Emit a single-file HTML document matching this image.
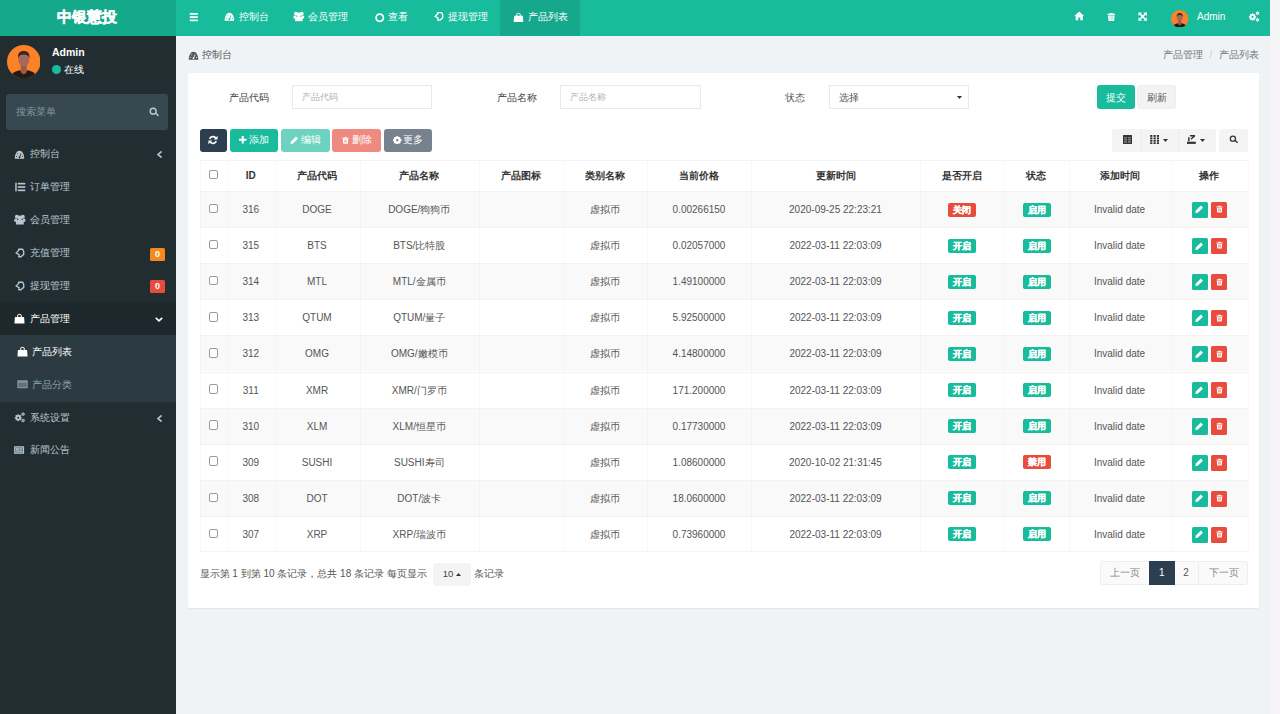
<!DOCTYPE html>
<html><head><meta charset="utf-8">
<style>
*{box-sizing:border-box;margin:0;padding:0}
html,body{width:1280px;height:714px;overflow:hidden}
body{background:#f5f5f7;font-family:"Liberation Sans",sans-serif;font-size:10px;color:#555;position:relative}
.a{position:absolute;white-space:nowrap}
svg.a{display:block}
</style></head><body>
<div class="a" style="left:0px;top:0px;width:1270px;height:714px;background:#f0f3f6;"></div>
<div class="a" style="left:0px;top:0px;width:176px;height:36px;background:#15a98b;"></div>
<div class="a" style="left:176px;top:0px;width:1094px;height:36px;background:#18bc9c;"></div>
<div class="a" style="left:0px;top:36px;width:176px;height:678px;background:#222d32;"></div>
<span class="a" style="left:57px;top:8.90px;font-size:15px;line-height:15px;color:#fff;font-weight:bold;-webkit-text-stroke:0.45px #fff">中银慧投</span>
<svg class="a" style="left:189.2px;top:12.6px;overflow:visible" width="9.6" height="8.2" viewBox="0 0 24 24" fill="#fff"><rect x="0" y="0" width="24" height="5" rx="1"/><rect x="0" y="9.5" width="24" height="5" rx="1"/><rect x="0" y="19" width="24" height="5" rx="1"/></svg>
<svg class="a" style="left:224px;top:11.5px;overflow:visible" width="10.8" height="9.5" viewBox="0 0 24 24" fill="#fff"><path d="M0 22C0 10.5 5.2 2 12 2s12 8.5 12 20z"/><circle fill="#18bc9c" cx="12" cy="18.5" r="2.4"/><path fill="#18bc9c" d="M11 18l4.2-9.5 1.8.8-4.2 9.5z"/><circle fill="#18bc9c" cx="4.5" cy="16" r="1.5"/><circle fill="#18bc9c" cx="7.5" cy="9.5" r="1.5"/><circle fill="#18bc9c" cx="19.5" cy="16" r="1.5"/></svg>
<span class="a" style="left:239px;top:12.00px;font-size:10px;line-height:10px;color:#fff;font-weight:normal;">控制台</span>
<svg class="a" style="left:293px;top:11.2px;overflow:visible" width="11.7" height="10.6" viewBox="0 0 24 24" fill="#fff"><circle cx="5.5" cy="6" r="4.3"/><circle cx="18.5" cy="6" r="4.3"/><circle cx="12" cy="8.5" r="5"/><path d="M0 10.5h6v6.5H0zM18 10.5h6v6.5h-6z"/><path d="M3.5 13.5h17V23h-17z" /><path d="M6 13h12v2H6z"/></svg>
<span class="a" style="left:308px;top:12.00px;font-size:10px;line-height:10px;color:#fff;font-weight:normal;">会员管理</span>
<svg class="a" style="left:374.5px;top:12.5px;overflow:visible" width="9.5" height="9.5" viewBox="0 0 24 24" fill="#fff"><circle cx="12" cy="12" r="9.2" fill="none" stroke="#fff" stroke-width="4.4"/></svg>
<span class="a" style="left:388px;top:12.00px;font-size:10px;line-height:10px;color:#fff;font-weight:normal;">查看</span>
<svg class="a" style="left:434px;top:11.2px;overflow:visible" width="9.5" height="10.8" viewBox="0 0 24 24" fill="#fff"><path d="M9 2.5h10.5L22 8.5v7L15 21.5H9.5l1-5.5L2.5 12 9 6z" fill="none" stroke="#fff" stroke-width="3.4" stroke-linejoin="round"/></svg>
<span class="a" style="left:448px;top:12.00px;font-size:10px;line-height:10px;color:#fff;font-weight:normal;">提现管理</span>
<div class="a" style="left:499.5px;top:0px;width:80.5px;height:36px;background:rgba(0,0,0,0.1);"></div>
<svg class="a" style="left:512.5px;top:11.5px;overflow:visible" width="11" height="10.5" viewBox="0 0 24 24" fill="#fff"><path d="M7 9V6.5C7 3.5 9.2 1.5 12 1.5s5 2 5 5V9h-2.2V6.5c0-1.6-1.2-2.8-2.8-2.8S9.2 4.9 9.2 6.5V9z"/><path d="M2 8.5h20l1 14.5H1z"/></svg>
<span class="a" style="left:527.5px;top:12.00px;font-size:10px;line-height:10px;color:#fff;font-weight:normal;">产品列表</span>
<svg class="a" style="left:1073.5px;top:11.3px;overflow:visible" width="10.5" height="9.8" viewBox="0 0 24 24" fill="#fff"><path d="M12 1.5L0 12h3.2v10.5h6.3V16h5v6.5h6.3V12H24z"/></svg>
<svg class="a" style="left:1106.8px;top:11.6px;overflow:visible" width="8.6" height="10" viewBox="0 0 24 24" fill="#fff"><path d="M8 0.5h8v2.5h6.5v3.5h-21V3H8z"/><path d="M2.8 7.5h18.4L19.8 23.5H4.2z"/><path fill="#9fe3d6" d="M7.5 10h2.2v10H7.5zM10.9 10h2.2v10h-2.2zM14.3 10h2.2v10h-2.2z"/></svg>
<svg class="a" style="left:1138px;top:12px;overflow:visible" width="9.3" height="9.2" viewBox="0 0 24 24" fill="#fff"><path d="M1 1h9.5L7.3 4.2 12 8.9l4.7-4.7L13.5 1H23v9.5l-3.2-3.2L15.1 12l4.7 4.7 3.2-3.2V23h-9.5l3.2-3.2L12 15.1l-4.7 4.7 3.2 3.2H1v-9.5l3.2 3.2L8.9 12 4.2 7.3 1 10.5z"/></svg>
<svg class="a" style="left:1171px;top:9.5px" width="17.5" height="17.5" viewBox="0 0 34 34"><defs><clipPath id="c2"><circle cx="17" cy="17" r="17"/></clipPath></defs><g clip-path="url(#c2)"><rect width="34" height="34" fill="#fb8227"/><path d="M3 36C3 29 8 26.5 13 25.5L17 28l4-2.5C26 26.5 31 29 31 36z" fill="#231a17"/><path d="M14 19h6v9l-3 2-3-2z" fill="#9a5b4c"/><ellipse cx="17" cy="14.5" rx="5.6" ry="7.2" fill="#a7675a"/><path d="M11.2 13.5C10.5 8.5 13 6 17 6s6.5 2.5 5.8 7.5c-.6-2.5-2.5-3.8-5.8-3.8s-5.2 1.3-5.8 3.8z" fill="#3b2620"/></g></svg>
<span class="a" style="left:1197px;top:11.50px;font-size:10px;line-height:10px;color:#fff;font-weight:normal;">Admin</span>
<svg class="a" style="left:1248px;top:11px;overflow:visible" width="12.3" height="11" viewBox="0 0 24 24" fill="#fff"><circle cx="8.5" cy="13" r="6.3" fill="#fff"/><rect x="7.0" y="5.1" width="3" height="3.2" fill="#fff" transform="rotate(0.0 8.5 13)"/><rect x="7.0" y="5.1" width="3" height="3.2" fill="#fff" transform="rotate(45.0 8.5 13)"/><rect x="7.0" y="5.1" width="3" height="3.2" fill="#fff" transform="rotate(90.0 8.5 13)"/><rect x="7.0" y="5.1" width="3" height="3.2" fill="#fff" transform="rotate(135.0 8.5 13)"/><rect x="7.0" y="5.1" width="3" height="3.2" fill="#fff" transform="rotate(180.0 8.5 13)"/><rect x="7.0" y="5.1" width="3" height="3.2" fill="#fff" transform="rotate(225.0 8.5 13)"/><rect x="7.0" y="5.1" width="3" height="3.2" fill="#fff" transform="rotate(270.0 8.5 13)"/><rect x="7.0" y="5.1" width="3" height="3.2" fill="#fff" transform="rotate(315.0 8.5 13)"/><circle cx="8.5" cy="13" r="2.4" fill="#18bc9c"/><circle cx="19.5" cy="5" r="3.2" fill="#fff"/><rect x="18.6" y="1.0999999999999996" width="1.8" height="2.3" fill="#fff" transform="rotate(0.0 19.5 5)"/><rect x="18.6" y="1.0999999999999996" width="1.8" height="2.3" fill="#fff" transform="rotate(60.0 19.5 5)"/><rect x="18.6" y="1.0999999999999996" width="1.8" height="2.3" fill="#fff" transform="rotate(120.0 19.5 5)"/><rect x="18.6" y="1.0999999999999996" width="1.8" height="2.3" fill="#fff" transform="rotate(180.0 19.5 5)"/><rect x="18.6" y="1.0999999999999996" width="1.8" height="2.3" fill="#fff" transform="rotate(240.0 19.5 5)"/><rect x="18.6" y="1.0999999999999996" width="1.8" height="2.3" fill="#fff" transform="rotate(300.0 19.5 5)"/><circle cx="19.5" cy="5" r="1.2" fill="#18bc9c"/><circle cx="19.5" cy="19.5" r="3.2" fill="#fff"/><rect x="18.6" y="15.6" width="1.8" height="2.3" fill="#fff" transform="rotate(0.0 19.5 19.5)"/><rect x="18.6" y="15.6" width="1.8" height="2.3" fill="#fff" transform="rotate(60.0 19.5 19.5)"/><rect x="18.6" y="15.6" width="1.8" height="2.3" fill="#fff" transform="rotate(120.0 19.5 19.5)"/><rect x="18.6" y="15.6" width="1.8" height="2.3" fill="#fff" transform="rotate(180.0 19.5 19.5)"/><rect x="18.6" y="15.6" width="1.8" height="2.3" fill="#fff" transform="rotate(240.0 19.5 19.5)"/><rect x="18.6" y="15.6" width="1.8" height="2.3" fill="#fff" transform="rotate(300.0 19.5 19.5)"/><circle cx="19.5" cy="19.5" r="1.2" fill="#18bc9c"/></svg>
<svg class="a" style="left:6.5px;top:44.5px" width="33.5" height="33.5" viewBox="0 0 34 34"><defs><clipPath id="c1"><circle cx="17" cy="17" r="17"/></clipPath></defs><g clip-path="url(#c1)"><rect width="34" height="34" fill="#fb8227"/><path d="M3 36C3 29 8 26.5 13 25.5L17 28l4-2.5C26 26.5 31 29 31 36z" fill="#231a17"/><path d="M14 19h6v9l-3 2-3-2z" fill="#9a5b4c"/><ellipse cx="17" cy="14.5" rx="5.6" ry="7.2" fill="#a7675a"/><path d="M11.2 13.5C10.5 8.5 13 6 17 6s6.5 2.5 5.8 7.5c-.6-2.5-2.5-3.8-5.8-3.8s-5.2 1.3-5.8 3.8z" fill="#3b2620"/></g></svg>
<span class="a" style="left:52px;top:46.75px;font-size:10.5px;line-height:10.5px;color:#fff;font-weight:bold;">Admin</span>
<div class="a" style="left:52px;top:65px;width:9px;height:9px;border-radius:50%;background:#18bc9c"></div>
<span class="a" style="left:64px;top:64.60px;font-size:10px;line-height:10px;color:#fff;font-weight:normal;">在线</span>
<div class="a" style="left:6px;top:94px;width:162px;height:36px;background:#374850;border-radius:3px"></div>
<span class="a" style="left:16px;top:107.25px;font-size:9.5px;line-height:9.5px;color:#8596a0;font-weight:normal;">搜索菜单</span>
<svg class="a" style="left:149px;top:107px;color:#b8c7ce;overflow:visible" width="10" height="10" viewBox="0 0 24 24" fill="#b8c7ce"><circle cx="10" cy="10" r="7" fill="none" stroke="currentColor" stroke-width="3.5"/><path d="M14.5 15.5l2.5-2.5 7 7-2.5 2.5z"/></svg>
<div class="a" style="left:0px;top:302px;width:176px;height:33px;background:#1e282c;"></div>
<div class="a" style="left:0px;top:335px;width:176px;height:66.5px;background:#2c3b41;"></div>
<svg class="a" style="left:14px;top:149.60000000000002px;overflow:visible" width="11" height="9.5" viewBox="0 0 24 24" fill="#b8c7ce"><path d="M0 22C0 10.5 5.2 2 12 2s12 8.5 12 20z"/><circle fill="#222d32" cx="12" cy="18.5" r="2.4"/><path fill="#222d32" d="M11 18l4.2-9.5 1.8.8-4.2 9.5z"/><circle fill="#222d32" cx="4.5" cy="16" r="1.5"/><circle fill="#222d32" cx="7.5" cy="9.5" r="1.5"/><circle fill="#222d32" cx="19.5" cy="16" r="1.5"/></svg>
<span class="a" style="left:30px;top:149.30px;font-size:10px;line-height:10px;color:#b8c7ce;font-weight:normal;">控制台</span>
<svg class="a" style="left:157px;top:151.3px;" width="5" height="7" viewBox="0 0 5 7" fill="#fff"><path d="M4.5 0.5L1 3.5l3.5 3" fill="none" stroke="#b8c7ce" stroke-width="1.6"/></svg>
<svg class="a" style="left:14.5px;top:182.20000000000002px;overflow:visible" width="10.5" height="10" viewBox="0 0 24 24" fill="#b8c7ce"><rect x="0" y="1.5" width="3.5" height="21"/><rect x="6" y="2" width="18" height="4"/><rect x="6" y="10" width="18" height="4"/><rect x="6" y="18" width="18" height="4"/></svg>
<span class="a" style="left:30px;top:182.20px;font-size:10px;line-height:10px;color:#b8c7ce;font-weight:normal;">订单管理</span>
<svg class="a" style="left:13.7px;top:214.10000000000002px;overflow:visible" width="11.7" height="11" viewBox="0 0 24 24" fill="#b8c7ce"><circle cx="5.5" cy="6" r="4.3"/><circle cx="18.5" cy="6" r="4.3"/><circle cx="12" cy="8.5" r="5"/><path d="M0 10.5h6v6.5H0zM18 10.5h6v6.5h-6z"/><path d="M3.5 13.5h17V23h-17z" /><path d="M6 13h12v2H6z"/></svg>
<span class="a" style="left:30px;top:215.10px;font-size:10px;line-height:10px;color:#b8c7ce;font-weight:normal;">会员管理</span>
<svg class="a" style="left:14.5px;top:248.0px;overflow:visible" width="9.5" height="10" viewBox="0 0 24 24" fill="none"><path d="M9 2.5h10.5L22 8.5v7L15 21.5H9.5l1-5.5L2.5 12 9 6z" fill="none" stroke="#b8c7ce" stroke-width="3.4" stroke-linejoin="round"/></svg>
<span class="a" style="left:30px;top:248.00px;font-size:10px;line-height:10px;color:#b8c7ce;font-weight:normal;">充值管理</span>
<div class="a" style="left:150px;top:247.50px;width:15px;height:13px;background:#f5891c;border-radius:1.5px;color:#fff;font-size:9px;font-weight:bold;line-height:13px;text-align:center">0</div>
<svg class="a" style="left:14.5px;top:280.9px;overflow:visible" width="9.5" height="10" viewBox="0 0 24 24" fill="none"><path d="M9 2.5h10.5L22 8.5v7L15 21.5H9.5l1-5.5L2.5 12 9 6z" fill="none" stroke="#b8c7ce" stroke-width="3.4" stroke-linejoin="round"/></svg>
<span class="a" style="left:30px;top:280.90px;font-size:10px;line-height:10px;color:#b8c7ce;font-weight:normal;">提现管理</span>
<div class="a" style="left:150px;top:280.40px;width:15px;height:13px;background:#e84c3d;border-radius:1.5px;color:#fff;font-size:9px;font-weight:bold;line-height:13px;text-align:center">0</div>
<svg class="a" style="left:14px;top:313.3px;overflow:visible" width="11" height="11" viewBox="0 0 24 24" fill="#fff"><path d="M7 9V6.5C7 3.5 9.2 1.5 12 1.5s5 2 5 5V9h-2.2V6.5c0-1.6-1.2-2.8-2.8-2.8S9.2 4.9 9.2 6.5V9z"/><path d="M2 8.5h20l1 14.5H1z"/></svg>
<span class="a" style="left:30px;top:313.80px;font-size:10px;line-height:10px;color:#fff;font-weight:normal;">产品管理</span>
<svg class="a" style="left:155px;top:317.3px;" width="8" height="5" viewBox="0 0 8 5" fill="#fff"><path d="M0.8 0.8l3.2 3 3.2-3" fill="none" stroke="#fff" stroke-width="1.6"/></svg>
<svg class="a" style="left:16.5px;top:346.2px;overflow:visible" width="11" height="11" viewBox="0 0 24 24" fill="#fff"><path d="M7 9V6.5C7 3.5 9.2 1.5 12 1.5s5 2 5 5V9h-2.2V6.5c0-1.6-1.2-2.8-2.8-2.8S9.2 4.9 9.2 6.5V9z"/><path d="M2 8.5h20l1 14.5H1z"/></svg>
<span class="a" style="left:32px;top:346.70px;font-size:10px;line-height:10px;color:#fff;font-weight:normal;">产品列表</span>
<svg class="a" style="left:16.5px;top:379.3px;overflow:visible" width="11" height="10.5" viewBox="0 0 24 24" fill="#8197a1"><rect x="0" y="3" width="24" height="18" rx="1.5"/><rect x="2.5" y="8.5" width="19" height="10" fill="#5e727b"/></svg>
<span class="a" style="left:32px;top:379.60px;font-size:10px;line-height:10px;color:#8aa4af;font-weight:normal;">产品分类</span>
<svg class="a" style="left:14px;top:412.2px;overflow:visible" width="11.5" height="10.5" viewBox="0 0 24 24" fill="#fff"><circle cx="8.5" cy="13" r="6.3" fill="#b8c7ce"/><rect x="7.0" y="5.1" width="3" height="3.2" fill="#b8c7ce" transform="rotate(0.0 8.5 13)"/><rect x="7.0" y="5.1" width="3" height="3.2" fill="#b8c7ce" transform="rotate(45.0 8.5 13)"/><rect x="7.0" y="5.1" width="3" height="3.2" fill="#b8c7ce" transform="rotate(90.0 8.5 13)"/><rect x="7.0" y="5.1" width="3" height="3.2" fill="#b8c7ce" transform="rotate(135.0 8.5 13)"/><rect x="7.0" y="5.1" width="3" height="3.2" fill="#b8c7ce" transform="rotate(180.0 8.5 13)"/><rect x="7.0" y="5.1" width="3" height="3.2" fill="#b8c7ce" transform="rotate(225.0 8.5 13)"/><rect x="7.0" y="5.1" width="3" height="3.2" fill="#b8c7ce" transform="rotate(270.0 8.5 13)"/><rect x="7.0" y="5.1" width="3" height="3.2" fill="#b8c7ce" transform="rotate(315.0 8.5 13)"/><circle cx="8.5" cy="13" r="2.4" fill="#222d32"/><circle cx="19.5" cy="5" r="3.2" fill="#b8c7ce"/><rect x="18.6" y="1.0999999999999996" width="1.8" height="2.3" fill="#b8c7ce" transform="rotate(0.0 19.5 5)"/><rect x="18.6" y="1.0999999999999996" width="1.8" height="2.3" fill="#b8c7ce" transform="rotate(60.0 19.5 5)"/><rect x="18.6" y="1.0999999999999996" width="1.8" height="2.3" fill="#b8c7ce" transform="rotate(120.0 19.5 5)"/><rect x="18.6" y="1.0999999999999996" width="1.8" height="2.3" fill="#b8c7ce" transform="rotate(180.0 19.5 5)"/><rect x="18.6" y="1.0999999999999996" width="1.8" height="2.3" fill="#b8c7ce" transform="rotate(240.0 19.5 5)"/><rect x="18.6" y="1.0999999999999996" width="1.8" height="2.3" fill="#b8c7ce" transform="rotate(300.0 19.5 5)"/><circle cx="19.5" cy="5" r="1.2" fill="#222d32"/><circle cx="19.5" cy="19.5" r="3.2" fill="#b8c7ce"/><rect x="18.6" y="15.6" width="1.8" height="2.3" fill="#b8c7ce" transform="rotate(0.0 19.5 19.5)"/><rect x="18.6" y="15.6" width="1.8" height="2.3" fill="#b8c7ce" transform="rotate(60.0 19.5 19.5)"/><rect x="18.6" y="15.6" width="1.8" height="2.3" fill="#b8c7ce" transform="rotate(120.0 19.5 19.5)"/><rect x="18.6" y="15.6" width="1.8" height="2.3" fill="#b8c7ce" transform="rotate(180.0 19.5 19.5)"/><rect x="18.6" y="15.6" width="1.8" height="2.3" fill="#b8c7ce" transform="rotate(240.0 19.5 19.5)"/><rect x="18.6" y="15.6" width="1.8" height="2.3" fill="#b8c7ce" transform="rotate(300.0 19.5 19.5)"/><circle cx="19.5" cy="19.5" r="1.2" fill="#222d32"/></svg>
<span class="a" style="left:30px;top:412.50px;font-size:10px;line-height:10px;color:#b8c7ce;font-weight:normal;">系统设置</span>
<svg class="a" style="left:157px;top:414.5px;" width="5" height="7" viewBox="0 0 5 7" fill="#fff"><path d="M4.5 0.5L1 3.5l3.5 3" fill="none" stroke="#b8c7ce" stroke-width="1.6"/></svg>
<svg class="a" style="left:13.3px;top:445.4px;overflow:visible" width="12.2" height="10" viewBox="0 0 24 24" fill="#b8c7ce"><rect x="0" y="3" width="24" height="18" rx="1.5"/><rect x="2.5" y="5.5" width="19" height="13" fill="#6f7f87"/><rect x="5" y="8" width="6" height="5" /><rect x="13" y="8" width="6" height="1.5"/><rect x="13" y="11.5" width="6" height="1.5"/><rect x="5" y="14.5" width="14" height="1.5"/></svg>
<span class="a" style="left:30px;top:445.40px;font-size:10px;line-height:10px;color:#b8c7ce;font-weight:normal;">新闻公告</span>
<svg class="a" style="left:187.5px;top:50.5px;overflow:visible" width="11" height="9.5" viewBox="0 0 24 24" fill="#555"><path d="M0 22C0 10.5 5.2 2 12 2s12 8.5 12 20z"/><circle fill="#f0f3f6" cx="12" cy="18.5" r="2.4"/><path fill="#f0f3f6" d="M11 18l4.2-9.5 1.8.8-4.2 9.5z"/><circle fill="#f0f3f6" cx="4.5" cy="16" r="1.5"/><circle fill="#f0f3f6" cx="7.5" cy="9.5" r="1.5"/><circle fill="#f0f3f6" cx="19.5" cy="16" r="1.5"/></svg>
<span class="a" style="left:201.5px;top:49.50px;font-size:10px;line-height:10px;color:#555;font-weight:normal;">控制台</span>
<span class="a" style="left:1162.5px;top:50.00px;font-size:10px;line-height:10px;color:#777;font-weight:normal;">产品管理</span>
<span class="a" style="left:1209.5px;top:50.00px;font-size:10px;line-height:10px;color:#ccc;font-weight:normal;">/</span>
<span class="a" style="left:1218.5px;top:50.00px;font-size:10px;line-height:10px;color:#777;font-weight:normal;">产品列表</span>
<div class="a" style="left:188px;top:73px;width:1071px;height:535px;background:#fff;border-radius:2px;box-shadow:0 1px 1px rgba(0,0,0,0.06)"></div>
<span class="a" style="left:229px;top:92.50px;font-size:10px;line-height:10px;color:#444;font-weight:normal;">产品代码</span>
<div class="a" style="left:292px;top:85px;width:140px;height:24px;background:#fff;border:1px solid #e9e9e9"></div>
<span class="a" style="left:302px;top:93.00px;font-size:9px;line-height:9px;color:#b0b0b0;font-weight:normal;">产品代码</span>
<span class="a" style="left:497px;top:92.50px;font-size:10px;line-height:10px;color:#444;font-weight:normal;">产品名称</span>
<div class="a" style="left:560px;top:85px;width:141px;height:24px;background:#fff;border:1px solid #e9e9e9"></div>
<span class="a" style="left:570px;top:93.00px;font-size:9px;line-height:9px;color:#b0b0b0;font-weight:normal;">产品名称</span>
<span class="a" style="left:785px;top:92.50px;font-size:10px;line-height:10px;color:#555;font-weight:normal;">状态</span>
<div class="a" style="left:829px;top:85px;width:140px;height:24px;background:#fff;border:1px solid #e9e9e9"></div>
<span class="a" style="left:838.5px;top:92.75px;font-size:9.5px;line-height:9.5px;color:#555;font-weight:normal;">选择</span>
<svg class="a" style="left:957px;top:95.5px;" width="5" height="3" viewBox="0 0 5 3" fill="#333"><path d="M0 0h5L2.5 3z"/></svg>
<div class="a" style="left:1097px;top:85px;width:38px;height:24px;background:#18bc9c;border-radius:3px"></div>
<span class="a" style="left:1016px;width:200px;text-align:center;top:92.75px;font-size:9.5px;line-height:9.5px;color:#fff;font-weight:normal;">提交</span>
<div class="a" style="left:1137px;top:85px;width:39px;height:24px;background:#f3f3f3;border-radius:3px;border:1px solid #efefef"></div>
<span class="a" style="left:1056.5px;width:200px;text-align:center;top:92.75px;font-size:9.5px;line-height:9.5px;color:#555;font-weight:normal;">刷新</span>
<div class="a" style="left:199.5px;top:128.8px;width:27.0px;height:23.19999999999999px;background:#2c3e50;border-radius:3px"></div>
<svg class="a" style="left:208.3px;top:134.8px;" width="10" height="10" viewBox="0 0 24 24" fill="#fff"><path d="M12 2a10 10 0 0 0-9.5 6.8l3.6 1.2A6.2 6.2 0 0 1 16.7 8L13.8 11H23V1.8l-3.4 3.4A10 10 0 0 0 12 2z"/><path d="M12 22a10 10 0 0 0 9.5-6.8l-3.6-1.2A6.2 6.2 0 0 1 7.3 16l2.9-3H1v9.2l3.4-3.4A10 10 0 0 0 12 22z"/></svg>
<div class="a" style="left:230px;top:128.8px;width:48px;height:23.19999999999999px;background:#18bc9c;border-radius:3px"></div>
<svg class="a" style="left:239.3px;top:136.3px;" width="7.5" height="7.5" viewBox="0 0 24 24" fill="#fff"><path d="M8.7 0h6.6v8.7H24v6.6h-8.7V24H8.7v-8.7H0V8.7h8.7z"/></svg>
<span class="a" style="left:249.2px;top:135.40px;font-size:10px;line-height:10px;color:#fff;font-weight:normal;">添加</span>
<div class="a" style="left:281px;top:128.8px;width:48.5px;height:23.19999999999999px;background:#6dd3c0;border-radius:3px"></div>
<svg class="a" style="left:289.8px;top:135.8px;" width="8.5" height="8.5" viewBox="0 0 24 24" fill="#fff"><path d="M17 1.5l5.5 5.5L8.5 21 1 23l2-7.5z"/></svg>
<span class="a" style="left:301px;top:135.40px;font-size:10px;line-height:10px;color:#fff;font-weight:normal;">编辑</span>
<div class="a" style="left:332px;top:128.8px;width:48.5px;height:23.19999999999999px;background:#ef8a80;border-radius:3px"></div>
<svg class="a" style="left:342.2px;top:135.6px;" width="7" height="8.6" viewBox="0 0 24 24" fill="#fff"><path d="M8 0.5h8v2.5h6.5v3.5h-21V3H8z"/><path d="M2.8 7.5h18.4L19.8 23.5H4.2z"/><path fill="#f3aaa2" d="M7.5 10h2.2v10H7.5zM10.9 10h2.2v10h-2.2zM14.3 10h2.2v10h-2.2z"/></svg>
<span class="a" style="left:351.5px;top:135.40px;font-size:10px;line-height:10px;color:#fff;font-weight:normal;">删除</span>
<div class="a" style="left:383.5px;top:128.8px;width:48.5px;height:23.19999999999999px;background:#76828d;border-radius:3px"></div>
<svg class="a" style="left:393px;top:135.8px;" width="8.5" height="8.5" viewBox="0 0 24 24" fill="#fff"><circle cx="12" cy="12" r="6.5" fill="none" stroke="#fff" stroke-width="6.5"/><path d="M9.5 0h5v5h-5zM9.5 19h5v5h-5zM0 9.5h5v5H0zM19 9.5h5v5h-5z"/><path d="M2.3 5.8l3.5-3.5 3.5 3.5-3.5 3.5zM14.7 18.2l3.5-3.5 3.5 3.5-3.5 3.5zM2.3 18.2l3.5-3.5 3.5 3.5-3.5 3.5zM14.7 5.8l3.5-3.5 3.5 3.5-3.5 3.5z"/></svg>
<span class="a" style="left:403.2px;top:135.40px;font-size:10px;line-height:10px;color:#fff;font-weight:normal;">更多</span>
<div class="a" style="left:1112px;top:128.8px;width:103.5px;height:23.19999999999999px;background:#f4f4f4;border-radius:3px"></div>
<div class="a" style="left:1140.5px;top:128.8px;width:1.0px;height:23.19999999999999px;background:#ececec;"></div>
<div class="a" style="left:1177.5px;top:128.8px;width:1.0px;height:23.19999999999999px;background:#ececec;"></div>
<svg class="a" style="left:1122.6px;top:134.8px;" width="9" height="9" viewBox="0 0 24 24" fill="#333"><rect x="0" y="0" width="24" height="24" rx="1.5"/><rect x="3" y="5.5" width="18" height="3.5" fill="#888"/><rect x="3" y="11" width="18" height="3.5" fill="#888"/><rect x="3" y="16.5" width="18" height="4" fill="#888"/><rect x="10.5" y="5" width="3" height="16"/></svg>
<svg class="a" style="left:1150px;top:134.8px;" width="9.3" height="9" viewBox="0 0 24 24" fill="#333"><rect x="0" y="0" width="6" height="5"/><rect x="9" y="0" width="6" height="5"/><rect x="18" y="0" width="6" height="5"/><rect x="0" y="6.5" width="6" height="5"/><rect x="9" y="6.5" width="6" height="5"/><rect x="18" y="6.5" width="6" height="5"/><rect x="0" y="13" width="6" height="5"/><rect x="9" y="13" width="6" height="5"/><rect x="18" y="13" width="6" height="5"/><rect x="0" y="19.5" width="6" height="4.5"/><rect x="9" y="19.5" width="6" height="4.5"/><rect x="18" y="19.5" width="6" height="4.5"/></svg>
<svg class="a" style="left:1163px;top:139.3px;" width="5" height="3" viewBox="0 0 5 3" fill="#333"><path d="M0 0h5L2.5 3z"/></svg>
<svg class="a" style="left:1187px;top:134.8px;" width="8.8" height="9" viewBox="0 0 24 24" fill="#333"><path d="M8 0h14v3.5L12 12.5 9.5 10 16 4H8z"/><path d="M3 6h4v11H3z"/><rect x="0" y="18" width="24" height="6"/></svg>
<svg class="a" style="left:1200.3px;top:139.3px;" width="5" height="3" viewBox="0 0 5 3" fill="#333"><path d="M0 0h5L2.5 3z"/></svg>
<div class="a" style="left:1218.5px;top:128.8px;width:29.5px;height:23.19999999999999px;background:#f4f4f4;border-radius:3px"></div>
<svg class="a" style="left:1229.2px;top:135.2px;color:#333" width="9.3" height="8.8" viewBox="0 0 24 24" fill="#333"><circle cx="10" cy="10" r="7" fill="none" stroke="currentColor" stroke-width="3.5"/><path d="M14.5 15.5l2.5-2.5 7 7-2.5 2.5z"/></svg>
<div class="a" style="left:200px;top:159.5px;width:1048px;height:31.5px;background:#fff;"></div>
<div class="a" style="left:200px;top:191.0px;width:1048px;height:36.099999999999994px;background:#f9f9f9;"></div>
<div class="a" style="left:200px;top:191.0px;width:1048px;height:1.0px;background:#f3f3f3;"></div>
<div class="a" style="left:200px;top:227.1px;width:1048px;height:36.099999999999994px;background:#fff;"></div>
<div class="a" style="left:200px;top:227.1px;width:1048px;height:1.0px;background:#f3f3f3;"></div>
<div class="a" style="left:200px;top:263.2px;width:1048px;height:36.10000000000002px;background:#f9f9f9;"></div>
<div class="a" style="left:200px;top:263.2px;width:1048px;height:1.0px;background:#f3f3f3;"></div>
<div class="a" style="left:200px;top:299.3px;width:1048px;height:36.10000000000002px;background:#fff;"></div>
<div class="a" style="left:200px;top:299.3px;width:1048px;height:1.0px;background:#f3f3f3;"></div>
<div class="a" style="left:200px;top:335.4px;width:1048px;height:36.10000000000002px;background:#f9f9f9;"></div>
<div class="a" style="left:200px;top:335.4px;width:1048px;height:1.0px;background:#f3f3f3;"></div>
<div class="a" style="left:200px;top:371.5px;width:1048px;height:36.10000000000002px;background:#fff;"></div>
<div class="a" style="left:200px;top:371.5px;width:1048px;height:1.0px;background:#f3f3f3;"></div>
<div class="a" style="left:200px;top:407.6px;width:1048px;height:36.10000000000002px;background:#f9f9f9;"></div>
<div class="a" style="left:200px;top:407.6px;width:1048px;height:1.0px;background:#f3f3f3;"></div>
<div class="a" style="left:200px;top:443.70000000000005px;width:1048px;height:36.10000000000002px;background:#fff;"></div>
<div class="a" style="left:200px;top:443.70000000000005px;width:1048px;height:1.0px;background:#f3f3f3;"></div>
<div class="a" style="left:200px;top:479.8px;width:1048px;height:36.099999999999966px;background:#f9f9f9;"></div>
<div class="a" style="left:200px;top:479.8px;width:1048px;height:1.0px;background:#f3f3f3;"></div>
<div class="a" style="left:200px;top:515.9000000000001px;width:1048px;height:36.10000000000002px;background:#fff;"></div>
<div class="a" style="left:200px;top:515.9000000000001px;width:1048px;height:1.0px;background:#f3f3f3;"></div>
<div class="a" style="left:200px;top:551px;width:1048px;height:1px;background:#f4f4f4;"></div>
<div class="a" style="left:200px;top:159.5px;width:1px;height:392.5px;background:rgba(0,0,0,0.025);"></div>
<div class="a" style="left:227px;top:159.5px;width:1px;height:392.5px;background:rgba(0,0,0,0.025);"></div>
<div class="a" style="left:274.5px;top:159.5px;width:1.0px;height:392.5px;background:rgba(0,0,0,0.025);"></div>
<div class="a" style="left:359.5px;top:159.5px;width:1.0px;height:392.5px;background:rgba(0,0,0,0.025);"></div>
<div class="a" style="left:479px;top:159.5px;width:1px;height:392.5px;background:rgba(0,0,0,0.025);"></div>
<div class="a" style="left:563px;top:159.5px;width:1px;height:392.5px;background:rgba(0,0,0,0.025);"></div>
<div class="a" style="left:647px;top:159.5px;width:1px;height:392.5px;background:rgba(0,0,0,0.025);"></div>
<div class="a" style="left:751px;top:159.5px;width:1px;height:392.5px;background:rgba(0,0,0,0.025);"></div>
<div class="a" style="left:920px;top:159.5px;width:1px;height:392.5px;background:rgba(0,0,0,0.025);"></div>
<div class="a" style="left:1004px;top:159.5px;width:1px;height:392.5px;background:rgba(0,0,0,0.025);"></div>
<div class="a" style="left:1068.6px;top:159.5px;width:1.0px;height:392.5px;background:rgba(0,0,0,0.025);"></div>
<div class="a" style="left:1170.5px;top:159.5px;width:1.0px;height:392.5px;background:rgba(0,0,0,0.025);"></div>
<div class="a" style="left:1248px;top:159.5px;width:1px;height:392.5px;background:rgba(0,0,0,0.025);"></div>
<div class="a" style="left:200px;top:159.5px;width:1048px;height:1.0px;background:#f3f3f3;"></div>
<div class="a" style="left:208.75px;top:169.75px;width:9.5px;height:9.5px;border:1px solid #9a9a9a;border-radius:2px;background:#fff"></div>
<span class="a" style="left:150.75px;width:200px;text-align:center;top:170.50px;font-size:10px;line-height:10px;color:#333;font-weight:bold;">ID</span>
<span class="a" style="left:217.0px;width:200px;text-align:center;top:170.50px;font-size:10px;line-height:10px;color:#333;font-weight:bold;">产品代码</span>
<span class="a" style="left:319.25px;width:200px;text-align:center;top:170.50px;font-size:10px;line-height:10px;color:#333;font-weight:bold;">产品名称</span>
<span class="a" style="left:421.0px;width:200px;text-align:center;top:170.50px;font-size:10px;line-height:10px;color:#333;font-weight:bold;">产品图标</span>
<span class="a" style="left:505.0px;width:200px;text-align:center;top:170.50px;font-size:10px;line-height:10px;color:#333;font-weight:bold;">类别名称</span>
<span class="a" style="left:599.0px;width:200px;text-align:center;top:170.50px;font-size:10px;line-height:10px;color:#333;font-weight:bold;">当前价格</span>
<span class="a" style="left:735.5px;width:200px;text-align:center;top:170.50px;font-size:10px;line-height:10px;color:#333;font-weight:bold;">更新时间</span>
<span class="a" style="left:862.0px;width:200px;text-align:center;top:170.50px;font-size:10px;line-height:10px;color:#333;font-weight:bold;">是否开启</span>
<span class="a" style="left:936.3px;width:200px;text-align:center;top:170.50px;font-size:10px;line-height:10px;color:#333;font-weight:bold;">状态</span>
<span class="a" style="left:1019.55px;width:200px;text-align:center;top:170.50px;font-size:10px;line-height:10px;color:#333;font-weight:bold;">添加时间</span>
<span class="a" style="left:1109.25px;width:200px;text-align:center;top:170.50px;font-size:10px;line-height:10px;color:#333;font-weight:bold;">操作</span>
<div class="a" style="left:208.75px;top:203.75px;width:9.5px;height:9.5px;border:1px solid #9a9a9a;border-radius:2px;background:#fff"></div>
<span class="a" style="left:150.75px;width:200px;text-align:center;top:205.00px;font-size:10px;line-height:10px;color:#555;font-weight:normal;">316</span>
<span class="a" style="left:217.0px;width:200px;text-align:center;top:205.00px;font-size:10px;line-height:10px;color:#555;font-weight:normal;">DOGE</span>
<span class="a" style="left:319.25px;width:200px;text-align:center;top:205.00px;font-size:10px;line-height:10px;color:#555;font-weight:normal;">DOGE/狗狗币</span>
<span class="a" style="left:505.0px;width:200px;text-align:center;top:205.00px;font-size:10px;line-height:10px;color:#555;font-weight:normal;">虚拟币</span>
<span class="a" style="left:599.0px;width:200px;text-align:center;top:205.00px;font-size:10px;line-height:10px;color:#555;font-weight:normal;">0.00266150</span>
<span class="a" style="left:735.5px;width:200px;text-align:center;top:205.00px;font-size:10px;line-height:10px;color:#555;font-weight:normal;">2020-09-25 22:23:21</span>
<div class="a" style="left:948px;top:202.50px;width:28px;height:14px;background:#e74c3c;border-radius:2px;color:#fff;font-size:9px;font-weight:bold;line-height:14px;text-align:center;-webkit-text-stroke:0.35px #fff">关闭</div>
<div class="a" style="left:1022.5px;top:202.50px;width:28px;height:14px;background:#18bc9c;border-radius:2px;color:#fff;font-size:9px;font-weight:bold;line-height:14px;text-align:center;-webkit-text-stroke:0.35px #fff">启用</div>
<span class="a" style="left:1019.55px;width:200px;text-align:center;top:205.00px;font-size:10px;line-height:10px;color:#555;font-weight:normal;">Invalid date</span>
<div class="a" style="left:1191.7px;top:201.8px;width:16.299999999999955px;height:16.19999999999999px;background:#18bc9c;border-radius:1.5px"></div>
<svg class="a" style="left:1195.3px;top:205.4px;" width="8.5" height="8.5" viewBox="0 0 24 24" fill="#fff"><path d="M16.5 1.5l6 6L8.5 21.5 1 23l1.5-7.5z"/></svg>
<div class="a" style="left:1211px;top:201.8px;width:16.200000000000045px;height:16.19999999999999px;background:#e74c3c;border-radius:1.5px"></div>
<svg class="a" style="left:1215.6px;top:205.3px;" width="7" height="8.4" viewBox="0 0 24 24" fill="#fff"><path d="M8 0.5h8v2.5h6.5v3.5h-21V3H8z"/><path d="M2.8 7.5h18.4L19.8 23.5H4.2z"/><path fill="#e98a80" d="M7.5 10h2.2v10H7.5zM10.9 10h2.2v10h-2.2zM14.3 10h2.2v10h-2.2z"/></svg>
<div class="a" style="left:208.75px;top:239.85px;width:9.5px;height:9.5px;border:1px solid #9a9a9a;border-radius:2px;background:#fff"></div>
<span class="a" style="left:150.75px;width:200px;text-align:center;top:241.10px;font-size:10px;line-height:10px;color:#555;font-weight:normal;">315</span>
<span class="a" style="left:217.0px;width:200px;text-align:center;top:241.10px;font-size:10px;line-height:10px;color:#555;font-weight:normal;">BTS</span>
<span class="a" style="left:319.25px;width:200px;text-align:center;top:241.10px;font-size:10px;line-height:10px;color:#555;font-weight:normal;">BTS/比特股</span>
<span class="a" style="left:505.0px;width:200px;text-align:center;top:241.10px;font-size:10px;line-height:10px;color:#555;font-weight:normal;">虚拟币</span>
<span class="a" style="left:599.0px;width:200px;text-align:center;top:241.10px;font-size:10px;line-height:10px;color:#555;font-weight:normal;">0.02057000</span>
<span class="a" style="left:735.5px;width:200px;text-align:center;top:241.10px;font-size:10px;line-height:10px;color:#555;font-weight:normal;">2022-03-11 22:03:09</span>
<div class="a" style="left:948px;top:238.60px;width:28px;height:14px;background:#18bc9c;border-radius:2px;color:#fff;font-size:9px;font-weight:bold;line-height:14px;text-align:center;-webkit-text-stroke:0.35px #fff">开启</div>
<div class="a" style="left:1022.5px;top:238.60px;width:28px;height:14px;background:#18bc9c;border-radius:2px;color:#fff;font-size:9px;font-weight:bold;line-height:14px;text-align:center;-webkit-text-stroke:0.35px #fff">启用</div>
<span class="a" style="left:1019.55px;width:200px;text-align:center;top:241.10px;font-size:10px;line-height:10px;color:#555;font-weight:normal;">Invalid date</span>
<div class="a" style="left:1191.7px;top:237.9px;width:16.299999999999955px;height:16.19999999999999px;background:#18bc9c;border-radius:1.5px"></div>
<svg class="a" style="left:1195.3px;top:241.5px;" width="8.5" height="8.5" viewBox="0 0 24 24" fill="#fff"><path d="M16.5 1.5l6 6L8.5 21.5 1 23l1.5-7.5z"/></svg>
<div class="a" style="left:1211px;top:237.9px;width:16.200000000000045px;height:16.19999999999999px;background:#e74c3c;border-radius:1.5px"></div>
<svg class="a" style="left:1215.6px;top:241.4px;" width="7" height="8.4" viewBox="0 0 24 24" fill="#fff"><path d="M8 0.5h8v2.5h6.5v3.5h-21V3H8z"/><path d="M2.8 7.5h18.4L19.8 23.5H4.2z"/><path fill="#e98a80" d="M7.5 10h2.2v10H7.5zM10.9 10h2.2v10h-2.2zM14.3 10h2.2v10h-2.2z"/></svg>
<div class="a" style="left:208.75px;top:275.95px;width:9.5px;height:9.5px;border:1px solid #9a9a9a;border-radius:2px;background:#fff"></div>
<span class="a" style="left:150.75px;width:200px;text-align:center;top:277.20px;font-size:10px;line-height:10px;color:#555;font-weight:normal;">314</span>
<span class="a" style="left:217.0px;width:200px;text-align:center;top:277.20px;font-size:10px;line-height:10px;color:#555;font-weight:normal;">MTL</span>
<span class="a" style="left:319.25px;width:200px;text-align:center;top:277.20px;font-size:10px;line-height:10px;color:#555;font-weight:normal;">MTL/金属币</span>
<span class="a" style="left:505.0px;width:200px;text-align:center;top:277.20px;font-size:10px;line-height:10px;color:#555;font-weight:normal;">虚拟币</span>
<span class="a" style="left:599.0px;width:200px;text-align:center;top:277.20px;font-size:10px;line-height:10px;color:#555;font-weight:normal;">1.49100000</span>
<span class="a" style="left:735.5px;width:200px;text-align:center;top:277.20px;font-size:10px;line-height:10px;color:#555;font-weight:normal;">2022-03-11 22:03:09</span>
<div class="a" style="left:948px;top:274.70px;width:28px;height:14px;background:#18bc9c;border-radius:2px;color:#fff;font-size:9px;font-weight:bold;line-height:14px;text-align:center;-webkit-text-stroke:0.35px #fff">开启</div>
<div class="a" style="left:1022.5px;top:274.70px;width:28px;height:14px;background:#18bc9c;border-radius:2px;color:#fff;font-size:9px;font-weight:bold;line-height:14px;text-align:center;-webkit-text-stroke:0.35px #fff">启用</div>
<span class="a" style="left:1019.55px;width:200px;text-align:center;top:277.20px;font-size:10px;line-height:10px;color:#555;font-weight:normal;">Invalid date</span>
<div class="a" style="left:1191.7px;top:274.0px;width:16.299999999999955px;height:16.19999999999999px;background:#18bc9c;border-radius:1.5px"></div>
<svg class="a" style="left:1195.3px;top:277.59999999999997px;" width="8.5" height="8.5" viewBox="0 0 24 24" fill="#fff"><path d="M16.5 1.5l6 6L8.5 21.5 1 23l1.5-7.5z"/></svg>
<div class="a" style="left:1211px;top:274.0px;width:16.200000000000045px;height:16.19999999999999px;background:#e74c3c;border-radius:1.5px"></div>
<svg class="a" style="left:1215.6px;top:277.5px;" width="7" height="8.4" viewBox="0 0 24 24" fill="#fff"><path d="M8 0.5h8v2.5h6.5v3.5h-21V3H8z"/><path d="M2.8 7.5h18.4L19.8 23.5H4.2z"/><path fill="#e98a80" d="M7.5 10h2.2v10H7.5zM10.9 10h2.2v10h-2.2zM14.3 10h2.2v10h-2.2z"/></svg>
<div class="a" style="left:208.75px;top:312.05px;width:9.5px;height:9.5px;border:1px solid #9a9a9a;border-radius:2px;background:#fff"></div>
<span class="a" style="left:150.75px;width:200px;text-align:center;top:313.30px;font-size:10px;line-height:10px;color:#555;font-weight:normal;">313</span>
<span class="a" style="left:217.0px;width:200px;text-align:center;top:313.30px;font-size:10px;line-height:10px;color:#555;font-weight:normal;">QTUM</span>
<span class="a" style="left:319.25px;width:200px;text-align:center;top:313.30px;font-size:10px;line-height:10px;color:#555;font-weight:normal;">QTUM/量子</span>
<span class="a" style="left:505.0px;width:200px;text-align:center;top:313.30px;font-size:10px;line-height:10px;color:#555;font-weight:normal;">虚拟币</span>
<span class="a" style="left:599.0px;width:200px;text-align:center;top:313.30px;font-size:10px;line-height:10px;color:#555;font-weight:normal;">5.92500000</span>
<span class="a" style="left:735.5px;width:200px;text-align:center;top:313.30px;font-size:10px;line-height:10px;color:#555;font-weight:normal;">2022-03-11 22:03:09</span>
<div class="a" style="left:948px;top:310.80px;width:28px;height:14px;background:#18bc9c;border-radius:2px;color:#fff;font-size:9px;font-weight:bold;line-height:14px;text-align:center;-webkit-text-stroke:0.35px #fff">开启</div>
<div class="a" style="left:1022.5px;top:310.80px;width:28px;height:14px;background:#18bc9c;border-radius:2px;color:#fff;font-size:9px;font-weight:bold;line-height:14px;text-align:center;-webkit-text-stroke:0.35px #fff">启用</div>
<span class="a" style="left:1019.55px;width:200px;text-align:center;top:313.30px;font-size:10px;line-height:10px;color:#555;font-weight:normal;">Invalid date</span>
<div class="a" style="left:1191.7px;top:310.1px;width:16.299999999999955px;height:16.19999999999999px;background:#18bc9c;border-radius:1.5px"></div>
<svg class="a" style="left:1195.3px;top:313.7px;" width="8.5" height="8.5" viewBox="0 0 24 24" fill="#fff"><path d="M16.5 1.5l6 6L8.5 21.5 1 23l1.5-7.5z"/></svg>
<div class="a" style="left:1211px;top:310.1px;width:16.200000000000045px;height:16.19999999999999px;background:#e74c3c;border-radius:1.5px"></div>
<svg class="a" style="left:1215.6px;top:313.6px;" width="7" height="8.4" viewBox="0 0 24 24" fill="#fff"><path d="M8 0.5h8v2.5h6.5v3.5h-21V3H8z"/><path d="M2.8 7.5h18.4L19.8 23.5H4.2z"/><path fill="#e98a80" d="M7.5 10h2.2v10H7.5zM10.9 10h2.2v10h-2.2zM14.3 10h2.2v10h-2.2z"/></svg>
<div class="a" style="left:208.75px;top:348.15px;width:9.5px;height:9.5px;border:1px solid #9a9a9a;border-radius:2px;background:#fff"></div>
<span class="a" style="left:150.75px;width:200px;text-align:center;top:349.40px;font-size:10px;line-height:10px;color:#555;font-weight:normal;">312</span>
<span class="a" style="left:217.0px;width:200px;text-align:center;top:349.40px;font-size:10px;line-height:10px;color:#555;font-weight:normal;">OMG</span>
<span class="a" style="left:319.25px;width:200px;text-align:center;top:349.40px;font-size:10px;line-height:10px;color:#555;font-weight:normal;">OMG/嫩模币</span>
<span class="a" style="left:505.0px;width:200px;text-align:center;top:349.40px;font-size:10px;line-height:10px;color:#555;font-weight:normal;">虚拟币</span>
<span class="a" style="left:599.0px;width:200px;text-align:center;top:349.40px;font-size:10px;line-height:10px;color:#555;font-weight:normal;">4.14800000</span>
<span class="a" style="left:735.5px;width:200px;text-align:center;top:349.40px;font-size:10px;line-height:10px;color:#555;font-weight:normal;">2022-03-11 22:03:09</span>
<div class="a" style="left:948px;top:346.90px;width:28px;height:14px;background:#18bc9c;border-radius:2px;color:#fff;font-size:9px;font-weight:bold;line-height:14px;text-align:center;-webkit-text-stroke:0.35px #fff">开启</div>
<div class="a" style="left:1022.5px;top:346.90px;width:28px;height:14px;background:#18bc9c;border-radius:2px;color:#fff;font-size:9px;font-weight:bold;line-height:14px;text-align:center;-webkit-text-stroke:0.35px #fff">启用</div>
<span class="a" style="left:1019.55px;width:200px;text-align:center;top:349.40px;font-size:10px;line-height:10px;color:#555;font-weight:normal;">Invalid date</span>
<div class="a" style="left:1191.7px;top:346.2px;width:16.299999999999955px;height:16.19999999999999px;background:#18bc9c;border-radius:1.5px"></div>
<svg class="a" style="left:1195.3px;top:349.79999999999995px;" width="8.5" height="8.5" viewBox="0 0 24 24" fill="#fff"><path d="M16.5 1.5l6 6L8.5 21.5 1 23l1.5-7.5z"/></svg>
<div class="a" style="left:1211px;top:346.2px;width:16.200000000000045px;height:16.19999999999999px;background:#e74c3c;border-radius:1.5px"></div>
<svg class="a" style="left:1215.6px;top:349.7px;" width="7" height="8.4" viewBox="0 0 24 24" fill="#fff"><path d="M8 0.5h8v2.5h6.5v3.5h-21V3H8z"/><path d="M2.8 7.5h18.4L19.8 23.5H4.2z"/><path fill="#e98a80" d="M7.5 10h2.2v10H7.5zM10.9 10h2.2v10h-2.2zM14.3 10h2.2v10h-2.2z"/></svg>
<div class="a" style="left:208.75px;top:384.25px;width:9.5px;height:9.5px;border:1px solid #9a9a9a;border-radius:2px;background:#fff"></div>
<span class="a" style="left:150.75px;width:200px;text-align:center;top:385.50px;font-size:10px;line-height:10px;color:#555;font-weight:normal;">311</span>
<span class="a" style="left:217.0px;width:200px;text-align:center;top:385.50px;font-size:10px;line-height:10px;color:#555;font-weight:normal;">XMR</span>
<span class="a" style="left:319.25px;width:200px;text-align:center;top:385.50px;font-size:10px;line-height:10px;color:#555;font-weight:normal;">XMR/门罗币</span>
<span class="a" style="left:505.0px;width:200px;text-align:center;top:385.50px;font-size:10px;line-height:10px;color:#555;font-weight:normal;">虚拟币</span>
<span class="a" style="left:599.0px;width:200px;text-align:center;top:385.50px;font-size:10px;line-height:10px;color:#555;font-weight:normal;">171.200000</span>
<span class="a" style="left:735.5px;width:200px;text-align:center;top:385.50px;font-size:10px;line-height:10px;color:#555;font-weight:normal;">2022-03-11 22:03:09</span>
<div class="a" style="left:948px;top:383.00px;width:28px;height:14px;background:#18bc9c;border-radius:2px;color:#fff;font-size:9px;font-weight:bold;line-height:14px;text-align:center;-webkit-text-stroke:0.35px #fff">开启</div>
<div class="a" style="left:1022.5px;top:383.00px;width:28px;height:14px;background:#18bc9c;border-radius:2px;color:#fff;font-size:9px;font-weight:bold;line-height:14px;text-align:center;-webkit-text-stroke:0.35px #fff">启用</div>
<span class="a" style="left:1019.55px;width:200px;text-align:center;top:385.50px;font-size:10px;line-height:10px;color:#555;font-weight:normal;">Invalid date</span>
<div class="a" style="left:1191.7px;top:382.3px;width:16.299999999999955px;height:16.19999999999999px;background:#18bc9c;border-radius:1.5px"></div>
<svg class="a" style="left:1195.3px;top:385.9px;" width="8.5" height="8.5" viewBox="0 0 24 24" fill="#fff"><path d="M16.5 1.5l6 6L8.5 21.5 1 23l1.5-7.5z"/></svg>
<div class="a" style="left:1211px;top:382.3px;width:16.200000000000045px;height:16.19999999999999px;background:#e74c3c;border-radius:1.5px"></div>
<svg class="a" style="left:1215.6px;top:385.8px;" width="7" height="8.4" viewBox="0 0 24 24" fill="#fff"><path d="M8 0.5h8v2.5h6.5v3.5h-21V3H8z"/><path d="M2.8 7.5h18.4L19.8 23.5H4.2z"/><path fill="#e98a80" d="M7.5 10h2.2v10H7.5zM10.9 10h2.2v10h-2.2zM14.3 10h2.2v10h-2.2z"/></svg>
<div class="a" style="left:208.75px;top:420.35px;width:9.5px;height:9.5px;border:1px solid #9a9a9a;border-radius:2px;background:#fff"></div>
<span class="a" style="left:150.75px;width:200px;text-align:center;top:421.60px;font-size:10px;line-height:10px;color:#555;font-weight:normal;">310</span>
<span class="a" style="left:217.0px;width:200px;text-align:center;top:421.60px;font-size:10px;line-height:10px;color:#555;font-weight:normal;">XLM</span>
<span class="a" style="left:319.25px;width:200px;text-align:center;top:421.60px;font-size:10px;line-height:10px;color:#555;font-weight:normal;">XLM/恒星币</span>
<span class="a" style="left:505.0px;width:200px;text-align:center;top:421.60px;font-size:10px;line-height:10px;color:#555;font-weight:normal;">虚拟币</span>
<span class="a" style="left:599.0px;width:200px;text-align:center;top:421.60px;font-size:10px;line-height:10px;color:#555;font-weight:normal;">0.17730000</span>
<span class="a" style="left:735.5px;width:200px;text-align:center;top:421.60px;font-size:10px;line-height:10px;color:#555;font-weight:normal;">2022-03-11 22:03:09</span>
<div class="a" style="left:948px;top:419.10px;width:28px;height:14px;background:#18bc9c;border-radius:2px;color:#fff;font-size:9px;font-weight:bold;line-height:14px;text-align:center;-webkit-text-stroke:0.35px #fff">开启</div>
<div class="a" style="left:1022.5px;top:419.10px;width:28px;height:14px;background:#18bc9c;border-radius:2px;color:#fff;font-size:9px;font-weight:bold;line-height:14px;text-align:center;-webkit-text-stroke:0.35px #fff">启用</div>
<span class="a" style="left:1019.55px;width:200px;text-align:center;top:421.60px;font-size:10px;line-height:10px;color:#555;font-weight:normal;">Invalid date</span>
<div class="a" style="left:1191.7px;top:418.40000000000003px;width:16.299999999999955px;height:16.19999999999999px;background:#18bc9c;border-radius:1.5px"></div>
<svg class="a" style="left:1195.3px;top:422.0px;" width="8.5" height="8.5" viewBox="0 0 24 24" fill="#fff"><path d="M16.5 1.5l6 6L8.5 21.5 1 23l1.5-7.5z"/></svg>
<div class="a" style="left:1211px;top:418.40000000000003px;width:16.200000000000045px;height:16.19999999999999px;background:#e74c3c;border-radius:1.5px"></div>
<svg class="a" style="left:1215.6px;top:421.90000000000003px;" width="7" height="8.4" viewBox="0 0 24 24" fill="#fff"><path d="M8 0.5h8v2.5h6.5v3.5h-21V3H8z"/><path d="M2.8 7.5h18.4L19.8 23.5H4.2z"/><path fill="#e98a80" d="M7.5 10h2.2v10H7.5zM10.9 10h2.2v10h-2.2zM14.3 10h2.2v10h-2.2z"/></svg>
<div class="a" style="left:208.75px;top:456.45px;width:9.5px;height:9.5px;border:1px solid #9a9a9a;border-radius:2px;background:#fff"></div>
<span class="a" style="left:150.75px;width:200px;text-align:center;top:457.70px;font-size:10px;line-height:10px;color:#555;font-weight:normal;">309</span>
<span class="a" style="left:217.0px;width:200px;text-align:center;top:457.70px;font-size:10px;line-height:10px;color:#555;font-weight:normal;">SUSHI</span>
<span class="a" style="left:319.25px;width:200px;text-align:center;top:457.70px;font-size:10px;line-height:10px;color:#555;font-weight:normal;">SUSHI寿司</span>
<span class="a" style="left:505.0px;width:200px;text-align:center;top:457.70px;font-size:10px;line-height:10px;color:#555;font-weight:normal;">虚拟币</span>
<span class="a" style="left:599.0px;width:200px;text-align:center;top:457.70px;font-size:10px;line-height:10px;color:#555;font-weight:normal;">1.08600000</span>
<span class="a" style="left:735.5px;width:200px;text-align:center;top:457.70px;font-size:10px;line-height:10px;color:#555;font-weight:normal;">2020-10-02 21:31:45</span>
<div class="a" style="left:948px;top:455.20px;width:28px;height:14px;background:#18bc9c;border-radius:2px;color:#fff;font-size:9px;font-weight:bold;line-height:14px;text-align:center;-webkit-text-stroke:0.35px #fff">开启</div>
<div class="a" style="left:1022.5px;top:455.20px;width:28px;height:14px;background:#e74c3c;border-radius:2px;color:#fff;font-size:9px;font-weight:bold;line-height:14px;text-align:center;-webkit-text-stroke:0.35px #fff">禁用</div>
<span class="a" style="left:1019.55px;width:200px;text-align:center;top:457.70px;font-size:10px;line-height:10px;color:#555;font-weight:normal;">Invalid date</span>
<div class="a" style="left:1191.7px;top:454.50000000000006px;width:16.299999999999955px;height:16.19999999999999px;background:#18bc9c;border-radius:1.5px"></div>
<svg class="a" style="left:1195.3px;top:458.1px;" width="8.5" height="8.5" viewBox="0 0 24 24" fill="#fff"><path d="M16.5 1.5l6 6L8.5 21.5 1 23l1.5-7.5z"/></svg>
<div class="a" style="left:1211px;top:454.50000000000006px;width:16.200000000000045px;height:16.19999999999999px;background:#e74c3c;border-radius:1.5px"></div>
<svg class="a" style="left:1215.6px;top:458.00000000000006px;" width="7" height="8.4" viewBox="0 0 24 24" fill="#fff"><path d="M8 0.5h8v2.5h6.5v3.5h-21V3H8z"/><path d="M2.8 7.5h18.4L19.8 23.5H4.2z"/><path fill="#e98a80" d="M7.5 10h2.2v10H7.5zM10.9 10h2.2v10h-2.2zM14.3 10h2.2v10h-2.2z"/></svg>
<div class="a" style="left:208.75px;top:492.55px;width:9.5px;height:9.5px;border:1px solid #9a9a9a;border-radius:2px;background:#fff"></div>
<span class="a" style="left:150.75px;width:200px;text-align:center;top:493.80px;font-size:10px;line-height:10px;color:#555;font-weight:normal;">308</span>
<span class="a" style="left:217.0px;width:200px;text-align:center;top:493.80px;font-size:10px;line-height:10px;color:#555;font-weight:normal;">DOT</span>
<span class="a" style="left:319.25px;width:200px;text-align:center;top:493.80px;font-size:10px;line-height:10px;color:#555;font-weight:normal;">DOT/波卡</span>
<span class="a" style="left:505.0px;width:200px;text-align:center;top:493.80px;font-size:10px;line-height:10px;color:#555;font-weight:normal;">虚拟币</span>
<span class="a" style="left:599.0px;width:200px;text-align:center;top:493.80px;font-size:10px;line-height:10px;color:#555;font-weight:normal;">18.0600000</span>
<span class="a" style="left:735.5px;width:200px;text-align:center;top:493.80px;font-size:10px;line-height:10px;color:#555;font-weight:normal;">2022-03-11 22:03:09</span>
<div class="a" style="left:948px;top:491.30px;width:28px;height:14px;background:#18bc9c;border-radius:2px;color:#fff;font-size:9px;font-weight:bold;line-height:14px;text-align:center;-webkit-text-stroke:0.35px #fff">开启</div>
<div class="a" style="left:1022.5px;top:491.30px;width:28px;height:14px;background:#18bc9c;border-radius:2px;color:#fff;font-size:9px;font-weight:bold;line-height:14px;text-align:center;-webkit-text-stroke:0.35px #fff">启用</div>
<span class="a" style="left:1019.55px;width:200px;text-align:center;top:493.80px;font-size:10px;line-height:10px;color:#555;font-weight:normal;">Invalid date</span>
<div class="a" style="left:1191.7px;top:490.6px;width:16.299999999999955px;height:16.19999999999999px;background:#18bc9c;border-radius:1.5px"></div>
<svg class="a" style="left:1195.3px;top:494.2px;" width="8.5" height="8.5" viewBox="0 0 24 24" fill="#fff"><path d="M16.5 1.5l6 6L8.5 21.5 1 23l1.5-7.5z"/></svg>
<div class="a" style="left:1211px;top:490.6px;width:16.200000000000045px;height:16.19999999999999px;background:#e74c3c;border-radius:1.5px"></div>
<svg class="a" style="left:1215.6px;top:494.1px;" width="7" height="8.4" viewBox="0 0 24 24" fill="#fff"><path d="M8 0.5h8v2.5h6.5v3.5h-21V3H8z"/><path d="M2.8 7.5h18.4L19.8 23.5H4.2z"/><path fill="#e98a80" d="M7.5 10h2.2v10H7.5zM10.9 10h2.2v10h-2.2zM14.3 10h2.2v10h-2.2z"/></svg>
<div class="a" style="left:208.75px;top:528.65px;width:9.5px;height:9.5px;border:1px solid #9a9a9a;border-radius:2px;background:#fff"></div>
<span class="a" style="left:150.75px;width:200px;text-align:center;top:529.90px;font-size:10px;line-height:10px;color:#555;font-weight:normal;">307</span>
<span class="a" style="left:217.0px;width:200px;text-align:center;top:529.90px;font-size:10px;line-height:10px;color:#555;font-weight:normal;">XRP</span>
<span class="a" style="left:319.25px;width:200px;text-align:center;top:529.90px;font-size:10px;line-height:10px;color:#555;font-weight:normal;">XRP/瑞波币</span>
<span class="a" style="left:505.0px;width:200px;text-align:center;top:529.90px;font-size:10px;line-height:10px;color:#555;font-weight:normal;">虚拟币</span>
<span class="a" style="left:599.0px;width:200px;text-align:center;top:529.90px;font-size:10px;line-height:10px;color:#555;font-weight:normal;">0.73960000</span>
<span class="a" style="left:735.5px;width:200px;text-align:center;top:529.90px;font-size:10px;line-height:10px;color:#555;font-weight:normal;">2022-03-11 22:03:09</span>
<div class="a" style="left:948px;top:527.40px;width:28px;height:14px;background:#18bc9c;border-radius:2px;color:#fff;font-size:9px;font-weight:bold;line-height:14px;text-align:center;-webkit-text-stroke:0.35px #fff">开启</div>
<div class="a" style="left:1022.5px;top:527.40px;width:28px;height:14px;background:#18bc9c;border-radius:2px;color:#fff;font-size:9px;font-weight:bold;line-height:14px;text-align:center;-webkit-text-stroke:0.35px #fff">启用</div>
<span class="a" style="left:1019.55px;width:200px;text-align:center;top:529.90px;font-size:10px;line-height:10px;color:#555;font-weight:normal;">Invalid date</span>
<div class="a" style="left:1191.7px;top:526.7px;width:16.299999999999955px;height:16.200000000000045px;background:#18bc9c;border-radius:1.5px"></div>
<svg class="a" style="left:1195.3px;top:530.3000000000001px;" width="8.5" height="8.5" viewBox="0 0 24 24" fill="#fff"><path d="M16.5 1.5l6 6L8.5 21.5 1 23l1.5-7.5z"/></svg>
<div class="a" style="left:1211px;top:526.7px;width:16.200000000000045px;height:16.200000000000045px;background:#e74c3c;border-radius:1.5px"></div>
<svg class="a" style="left:1215.6px;top:530.2px;" width="7" height="8.4" viewBox="0 0 24 24" fill="#fff"><path d="M8 0.5h8v2.5h6.5v3.5h-21V3H8z"/><path d="M2.8 7.5h18.4L19.8 23.5H4.2z"/><path fill="#e98a80" d="M7.5 10h2.2v10H7.5zM10.9 10h2.2v10h-2.2zM14.3 10h2.2v10h-2.2z"/></svg>
<span class="a" style="left:199.5px;top:568.50px;font-size:10px;line-height:10px;color:#555;font-weight:normal;">显示第 1 到第 10 条记录，总共 18 条记录 每页显示</span>
<div class="a" style="left:432.5px;top:562.5px;width:38.5px;height:23.5px;background:#f4f4f4;border-radius:3px"></div>
<span class="a" style="left:442.8px;top:569.25px;font-size:9.5px;line-height:9.5px;color:#444;font-weight:normal;">10</span>
<svg class="a" style="left:456px;top:572.5px;" width="5" height="3" viewBox="0 0 5 3" fill="#333"><path d="M0 3h5L2.5 0z"/></svg>
<span class="a" style="left:473.5px;top:568.50px;font-size:10px;line-height:10px;color:#555;font-weight:normal;">条记录</span>
<div class="a" style="left:1100px;top:560.5px;width:147.5px;height:24.0px;background:#fafafa;border:1px solid #eeeeee;border-radius:3px"></div>
<div class="a" style="left:1149px;top:560.5px;width:25.5px;height:24.0px;background:#2c3e50;"></div>
<div class="a" style="left:1198px;top:560.5px;width:1px;height:24.0px;background:#eeeeee;"></div>
<span class="a" style="left:1110px;top:567.50px;font-size:10px;line-height:10px;color:#888;font-weight:normal;">上一页</span>
<span class="a" style="left:1061.75px;width:200px;text-align:center;top:567.50px;font-size:10px;line-height:10px;color:#fff;font-weight:normal;">1</span>
<span class="a" style="left:1086px;width:200px;text-align:center;top:567.50px;font-size:10px;line-height:10px;color:#555;font-weight:normal;">2</span>
<span class="a" style="left:1208.5px;top:567.50px;font-size:10px;line-height:10px;color:#888;font-weight:normal;">下一页</span>
</body></html>
